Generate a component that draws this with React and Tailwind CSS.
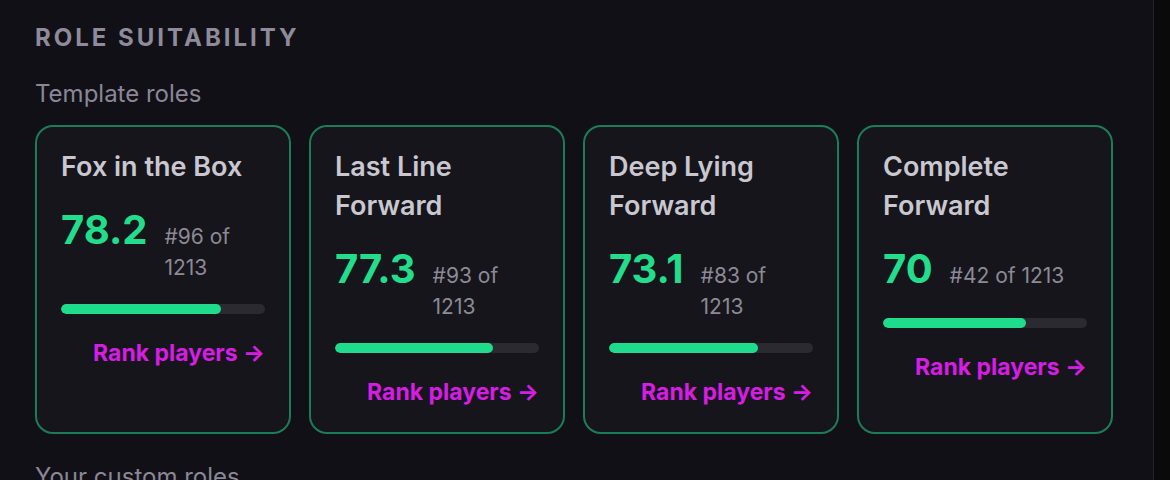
const roles = [
  { name: "Fox in the Box", score: 78.2, rank: 96, total: 1213 },
  { name: "Last Line Forward", score: 77.3, rank: 93, total: 1213 },
  { name: "Deep Lying Forward", score: 73.1, rank: 83, total: 1213 },
  { name: "Complete Forward", score: 70, rank: 42, total: 1213 },
];

function RoleCard({ role }) {
  return (
    <div className="flex flex-col rounded-[18px] border-2 border-[#1b7d57] bg-[#16151b] px-6 pt-5 pb-6">
      <h3 className="text-[27px] leading-[39px] font-semibold text-[#c9c8d0]">{role.name}</h3>
      <div className="mt-4 flex items-baseline">
        <span className="text-[40px] leading-[56px] font-bold text-[#22dd8c]">{role.score}</span>
        <span className="ml-[17px] text-[21px] leading-[31px] text-[#8c8a95]">
          #{role.rank} of {role.total}
        </span>
      </div>
      <div className="mt-[21px] h-[10px] w-full rounded-full bg-[#2a2a30] overflow-hidden">
        <div className="h-full rounded-full bg-[#1fdc8c]" style={{ width: `${role.score}%` }} />
      </div>
      <a className="mt-6 self-end text-[23px] leading-[31px] font-bold text-[#d61de4]">
        Rank players →
      </a>
    </div>
  );
}

export default function App() {
  return (
    <div className="flex h-[480px] w-full overflow-hidden bg-[#0a0a0b] font-['Inter',sans-serif]">
      <section className="w-[1154px] shrink-0 border-r border-[#232228] bg-[#111016] pl-[35px] pr-[40px] pt-[22px]">
        <h2 className="text-[24px] leading-8 font-bold uppercase tracking-[3px] text-[#8e8b9b]">
          Role suitability
        </h2>
        <p className="mt-6 text-[24px] leading-8 text-[#8a8796]">Template roles</p>
        <div className="mt-[15px] grid grid-cols-4 gap-[18px] h-[308px]">
          {roles.map((r) => (
            <RoleCard key={r.name} role={r} />
          ))}
        </div>
        <p className="mt-7 text-[24px] leading-8 text-[#8a8796]">Your custom roles</p>
      </section>
    </div>
  );
}
